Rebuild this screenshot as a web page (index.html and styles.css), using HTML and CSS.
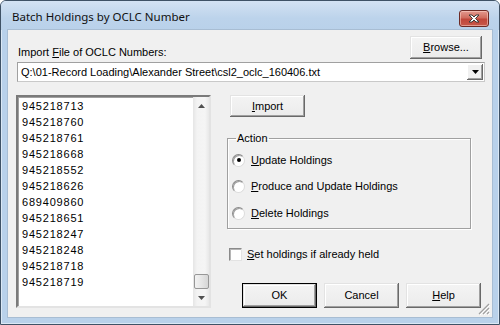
FILE: index.html
```html
<!DOCTYPE html>
<html lang="en">
<head>
    <meta charset="UTF-8">
    <title>Batch Holdings by OCLC Number</title>
    <link rel="stylesheet" href="styles.css">
</head>
<body>
    <div class="window">
        <!-- title bar -->
        <div class="titlebar">
            <span class="title">Batch Holdings by OCLC Number</span>
            <div class="close">
                <svg width="14" height="9" viewBox="0 0 14 9">
                    <path d="M2 1 L5 1 L7 3 L9 1 L12 1 L8.5 4.5 L12 8 L9 8 L7 6 L5 8 L2 8 L5.5 4.5 Z" fill="#fff" stroke="#3b3b3b" stroke-width="1" stroke-linejoin="round"/>
                </svg>
            </div>
        </div>

        <div class="client">
            <div class="file-row">
                <span class="file-label">Import <u>F</u>ile of OCLC Numbers:</span>
                <button class="btn browse"><u>B</u>rowse...</button>
            </div>

            <div class="combo">
                <span class="combo-text">Q:\01-Record Loading\Alexander Street\csl2_oclc_160406.txt</span>
                <span class="combo-drop">
                    <svg width="7" height="4" viewBox="0 0 7 4"><path d="M0 0 H7 L3.5 4 Z" fill="#000"/></svg>
                </span>
            </div>

            <div class="main">
                <!-- list of numbers -->
                <div class="listbox">
                    <ul class="items">
                        <li>945218713</li>
                        <li>945218760</li>
                        <li>945218761</li>
                        <li>945218668</li>
                        <li>945218552</li>
                        <li>945218626</li>
                        <li>689409860</li>
                        <li>945218651</li>
                        <li>945218247</li>
                        <li>945218248</li>
                        <li>945218718</li>
                        <li>945218719</li>
                    </ul>
                    <div class="vscroll">
                        <span class="sb-arrow">
                            <svg width="7" height="4" viewBox="0 0 7 4"><path d="M3.5 0 L7 4 H0 Z" fill="#505050"/></svg>
                        </span>
                        <div class="sb-track"><div class="sb-thumb"></div></div>
                        <span class="sb-arrow">
                            <svg width="7" height="4" viewBox="0 0 7 4"><path d="M0 0 H7 L3.5 4 Z" fill="#505050"/></svg>
                        </span>
                    </div>
                </div>

                <div class="side">
                    <button class="btn import"><u>I</u>mport</button>

                    <fieldset class="group">
                        <legend>Action</legend>
                        <div class="option">
                            <span class="radio checked"></span>
                            <span><u>U</u>pdate Holdings</span>
                        </div>
                        <div class="option">
                            <span class="radio"></span>
                            <span><u>P</u>roduce and Update Holdings</span>
                        </div>
                        <div class="option">
                            <span class="radio"></span>
                            <span><u>D</u>elete Holdings</span>
                        </div>
                    </fieldset>

                    <div class="check-row">
                        <span class="checkbox"></span>
                        <span><u>S</u>et holdings if already held</span>
                    </div>

                    <div class="buttons">
                        <button class="btn default">OK</button>
                        <button class="btn">Cancel</button>
                        <button class="btn"><u>H</u>elp</button>
                    </div>
                </div>
            </div>

            <!-- size grip -->
            <svg class="grip" width="12" height="12" viewBox="0 0 12 12">
                <path d="M11 1 L1 11 M11 5 L5 11 M11 9 L9 11" stroke="#a0a0a0" stroke-width="1.2"/>
                <path d="M12 2 L2 12 M12 6 L6 12 M12 10 L10 12" stroke="#fff" stroke-width="1"/>
            </svg>
        </div>
    </div>
</body>
</html>
```

FILE: styles.css
```css
html, body {
    margin: 0;
    padding: 0;
    background: #fff;
}
body {
    font-family: "Liberation Sans", Arial, sans-serif;
    font-size: 11px;
    color: #000;
}
u {
    text-decoration: underline;
    text-underline-offset: 1px;
}

/* window frame */
.window {
    width: 500px;
    height: 325px;
    box-sizing: border-box;
    border: 1px solid #3f5266;
    border-radius: 6px 6px 0 0;
    background: #b9d1ea;
    display: flex;
    flex-direction: column;
    padding: 0 7px 7px 7px;
    box-shadow: inset 0 0 0 1px #dbe8f5;
}
.titlebar {
    height: 29px;
    margin: 0 -7px;
    padding: 0 10px 0 11px;
    display: flex;
    align-items: center;
    justify-content: space-between;
    background: linear-gradient(#d3e2f3, #bcd3eb 60%, #b9d1ea);
    border-radius: 5px 5px 0 0;
}
.title {
    font-family: "Noto Sans", "Open Sans", sans-serif;
    font-size: 11.5px;
    color: #101010;
    padding-top: 2px;
}
.close {
    width: 28px;
    height: 15px;
    margin-top: 6px;
    border: 1px solid #6d2a25;
    border-radius: 3px;
    background: linear-gradient(#e3998f, #d06d5f 45%, #c0463a 55%, #c8584a);
    box-shadow: inset 0 0 0 1px rgba(255, 220, 210, 0.5);
    display: flex;
    align-items: center;
    justify-content: center;
}
.close svg {
    display: block;
}

/* client area */
.client {
    flex: 1;
    position: relative;
    background: #f0f0f0;
    padding: 6px 10px 0 8px;
    display: flex;
    flex-direction: column;
    box-shadow: 0 0 0 1px #a8bdd3;
}

.file-row {
    display: flex;
    justify-content: space-between;
    align-items: flex-start;
    height: 23px;
}
.file-label {
    margin: 10px 0 0 2px;
    line-height: 13px;
}

/* buttons */
.btn {
    font-family: "Liberation Sans", Arial, sans-serif;
    font-size: 11px;
    font-weight: normal;
    color: #000;
    background: linear-gradient(#f4f4f4, #ebebeb);
    border: none;
    padding: 0;
    box-shadow: inset -1px -1px #696969, inset 1px 1px #e3e3e3, inset -2px -2px #a0a0a0, inset 2px 2px #fff;
    width: 75px;
    height: 25px;
    line-height: 13px;
}
.browse {
    width: 72px;
    height: 23px;
}
.import {
    width: 75px;
    height: 22px;
    margin-left: 3px;
}
.btn.default {
    border: 1px solid #000;
}

/* combo box */
.combo {
    margin: 3px -3px 0 1px;
    height: 20px;
    box-sizing: border-box;
    border: 1px solid #c9c9c9;
    border-top-color: #a0a0a0;
    border-left-color: #a0a0a0;
    background: #fff;
    display: flex;
    align-items: center;
    padding: 1px;
}
.combo-text {
    flex: 1;
    padding-left: 2px;
    line-height: 13px;
}
.combo-drop {
    width: 16px;
    height: 16px;
    background: #f0f0f0;
    box-shadow: inset -1px -1px #696969, inset 1px 1px #fff, inset -2px -2px #a0a0a0;
    display: flex;
    align-items: center;
    justify-content: center;
}

.main {
    display: flex;
    margin-top: 13px;
}

/* list box */
.listbox {
    width: 195px;
    height: 213px;
    box-sizing: border-box;
    background: #fff;
    border: 2px solid;
    border-color: #7a7a7a #e3e3e3 #e3e3e3 #7a7a7a;
    box-shadow: inset 1px 1px #a0a0a0;
    display: flex;
}
.items {
    flex: 1;
    list-style: none;
    margin: 0;
    padding: 1px 0 0 4px;
    line-height: 16px;
    letter-spacing: 0.8px;
    overflow: hidden;
}
.vscroll {
    width: 16px;
    display: flex;
    flex-direction: column;
    background: linear-gradient(90deg, #e5e5e5, #f3f3f3 25%, #f5f5f5 75%, #e8e8e8);
}
.sb-arrow {
    height: 17px;
    display: flex;
    align-items: center;
    justify-content: center;
}
.sb-track {
    flex: 1;
    display: flex;
    flex-direction: column;
    justify-content: flex-end;
}
.sb-thumb {
    height: 13px;
    margin-left: 1px;
    border: 1px solid #979797;
    border-radius: 2px;
    background: linear-gradient(90deg, #f2f2f2, #e6e6e6 50%, #d6d6d6);
}

/* right column */
.side {
    margin-left: 16px;
    width: 255px;
    display: flex;
    flex-direction: column;
}
.group {
    margin: 15px 0 0 0;
    width: 244px;
    box-sizing: border-box;
    padding: 2px 0 0 4px;
    border: 1px solid #a0a0a0;
    box-shadow: inset 1px 1px #fff, 1px 1px #fff;
    height: 97px;
}
.group legend {
    margin-left: 4px;
    padding: 0 1px;
    line-height: 13px;
}
.option {
    height: 26.67px;
    display: flex;
    align-items: center;
    gap: 6px;
    line-height: 13px;
}
.radio {
    width: 11px;
    height: 11px;
    border-radius: 50%;
    background: radial-gradient(circle at 60% 60%, #fff 55%, #ececec);
    border: 1px solid;
    border-color: #8a8a8a #dcdcdc #dcdcdc #8a8a8a;
    box-shadow: inset 1px 1px #a0a0a0;
    position: relative;
    flex: none;
}
.radio.checked::after {
    content: "";
    position: absolute;
    left: 3.5px;
    top: 3.5px;
    width: 4px;
    height: 4px;
    border-radius: 50%;
    background: #000;
}

.check-row {
    margin: 19px 0 0 2px;
    display: flex;
    align-items: center;
    gap: 5px;
    line-height: 13px;
}
.checkbox {
    width: 11px;
    height: 11px;
    background: #fff;
    border: 1px solid;
    border-color: #8a8a8a #e3e3e3 #e3e3e3 #8a8a8a;
    box-shadow: inset 1px 1px #b5b5b5;
}

.buttons {
    display: flex;
    gap: 7px;
    margin: 22px 0 0 15px;
}

.grip {
    position: absolute;
    right: 2px;
    bottom: 2px;
}
```
